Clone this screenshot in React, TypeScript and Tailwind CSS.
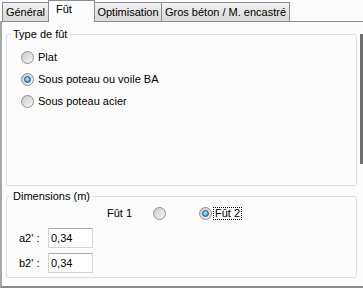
import React from 'react';

function Radio({ checked = false }: { checked?: boolean }) {
  return (
    <span className="w-[13px] h-[13px] shrink-0 rounded-full border border-[#8f9092] bg-[linear-gradient(135deg,#c9cacb,#f6f6f6)] flex items-center justify-center">
      {checked && (
        <span className="w-[7px] h-[7px] rounded-full border border-[#1c5a8e] bg-[radial-gradient(circle_at_45%_40%,#c8ecff,#3a9be0_70%)]" />
      )}
    </span>
  );
}

function Tab({ label, selected = false, className = '' }: { label: string; selected?: boolean; className?: string }) {
  if (selected) {
    return (
      <div className={`relative z-10 h-[22px] -mb-px -ml-px bg-[#fcfcfc] border border-b-0 border-[#898c95] pt-[2px] ${className}`}>
        {label}
      </div>
    );
  }
  return (
    <div
      className={`h-[19px] -ml-px border border-b-0 border-[#898c95] bg-[linear-gradient(#f3f3f3,#e3e3e3_50%,#dadada)] flex items-center justify-center pt-px ${className}`}
    >
      {label}
    </div>
  );
}

function NumberField({ label, value }: { label: string; value: string }) {
  return (
    <div className="flex items-center h-[20px]">
      <span className="w-[29px]">{label}</span>
      <div className="w-[45px] h-[20px] border border-[#d2d6dc] border-t-[#abadb3] bg-white pl-[2px] flex items-center">
        {value}
      </div>
    </div>
  );
}

export default function App() {
  return (
    <div className="w-[363px] h-[288px] bg-[#fcfcfc] flex flex-col overflow-hidden text-[11px] leading-[13px] text-black font-['Liberation_Sans',Arial,sans-serif]">
      {/* Tabs */}
      <div className="flex items-end h-[21px] pl-[3px]">
        <Tab label="Général" className="w-[47px]" />
        <Tab label="Fût" selected className="w-[47px] pl-[7px]" />
        <Tab label="Optimisation" className="w-[68px]" />
        <Tab label="Gros béton / M. encastré" className="w-[129px]" />
      </div>

      {/* Panel */}
      <div className="flex-1 flex border-t border-l-2 border-b-2 border-t-[#898c95] border-l-[#a5a7ab] border-b-[#8a8a8a] pt-[6px] pl-[4px]">
        <div className="w-[352px] flex flex-col gap-[4px]">
          {/* Type de fût */}
          <fieldset className="h-[158px] border border-[#d5dfe5] rounded-[3px] p-0">
            <legend className="ml-[4px] px-[2px] leading-[12px]">Type de fût</legend>
            <div className="pl-[14px] pt-[11px] flex flex-col gap-[9px]">
              <label className="flex items-center gap-[4px] h-[13px]">
                <Radio />
                <span>Plat</span>
              </label>
              <label className="flex items-center gap-[4px] h-[13px]">
                <Radio checked />
                <span>Sous poteau ou voile BA</span>
              </label>
              <label className="flex items-center gap-[4px] h-[13px]">
                <Radio />
                <span>Sous poteau acier</span>
              </label>
            </div>
          </fieldset>

          {/* Dimensions */}
          <fieldset className="h-[88px] border border-[#d5dfe5] rounded-[3px] p-0">
            <legend className="ml-[4px] px-[2px] leading-[12px]">Dimensions (m)</legend>
            <div className="pl-[12px] pt-[5px] flex flex-col">
              <div className="flex items-center h-[13px] ml-[88px]">
                <span className="w-[46px]">Fût 1</span>
                <Radio />
                <span className="ml-[33px]">
                  <Radio checked />
                </span>
                <span className="ml-px border border-dotted border-black leading-[11px] px-px">Fût 2</span>
              </div>
              <div className="mt-[8px] flex flex-col gap-[5px]">
                <NumberField label="a2' :" value="0,34" />
                <NumberField label="b2' :" value="0,34" />
              </div>
            </div>
          </fieldset>
        </div>

        {/* scrollbar thumb */}
        <div className="ml-[3px] mt-[6px] w-[3px] h-[130px] bg-[#707070]" />
      </div>
    </div>
  );
}
